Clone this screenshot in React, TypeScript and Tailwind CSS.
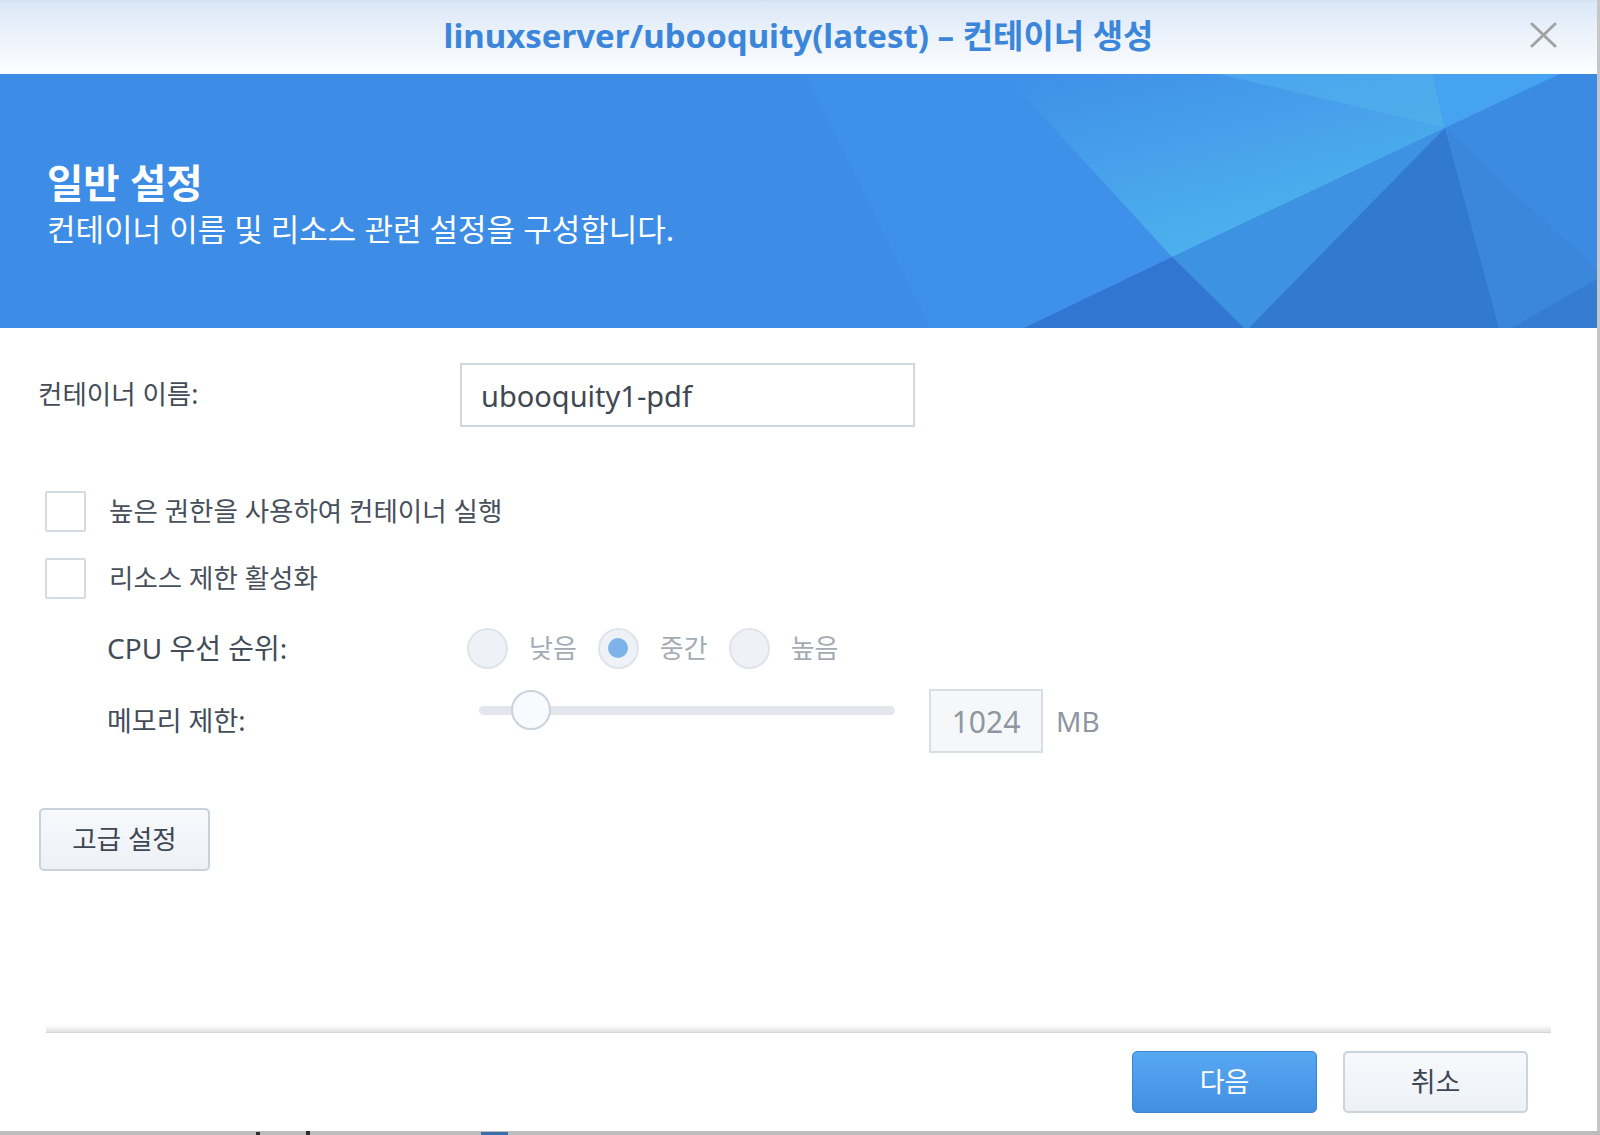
import React, { useState } from 'react';

const KR = "font-['Noto_Sans','Noto_Sans_CJK_KR',sans-serif]";

const BannerFacets: React.FC = () => (
  <svg
    className="absolute inset-0"
    width="1597"
    height="254"
    viewBox="0 0 1597 254"
    preserveAspectRatio="none"
  >
    <defs>
      <linearGradient id="lightFacet" x1="0" y1="0" x2="0.6" y2="1">
        <stop offset="0" stopColor="#3f8fe8" />
        <stop offset="1" stopColor="#4fb4ee" />
      </linearGradient>
      <linearGradient id="topFacet" x1="0" y1="0" x2="1" y2="1">
        <stop offset="0" stopColor="#4ba6ef" />
        <stop offset="1" stopColor="#4faee9" />
      </linearGradient>
    </defs>
    <polygon points="805,0 1004,0 1172,183 1024,254 930,254" fill="#3f90e8" />
    <polygon points="1004,0 1218,0 1445,54 1172,183" fill="url(#lightFacet)" />
    <polygon points="1218,0 1433,0 1445,54" fill="url(#topFacet)" />
    <polygon points="1433,0 1560,0 1445,54" fill="#45a3f1" />
    <polygon points="1560,0 1597,0 1597,196 1445,54" fill="#3b8be2" />
    <polygon points="1172,183 1445,54 1249,254 1244,254" fill="#3e92e2" />
    <polygon points="1172,183 1244,254 1024,254" fill="#3176d0" />
    <polygon points="1445,54 1499,254 1249,254" fill="#3279d1" />
    <polygon points="1445,54 1597,196 1597,254 1499,254" fill="#3a87dc" />
    <polygon points="1597,205 1597,254 1512,254" fill="#347dd3" />
  </svg>
);

const Checkbox: React.FC<{ label: string }> = ({ label }) => {
  const [on, setOn] = useState(false);
  return (
    <label className="flex items-center cursor-pointer">
      <span
        onClick={() => setOn(!on)}
        className={`ml-[7px] w-[41px] h-[41px] border-2 border-[#d5dbe3] rounded-[2px] ${on ? 'bg-[#4a95e6]' : 'bg-white'}`}
      />
      <span className="ml-[23px] text-[26.5px] text-[#47505b]">{label}</span>
    </label>
  );
};

const Radio: React.FC<{ label: string; checked?: boolean }> = ({ label, checked }) => (
  <div className="flex items-center">
    <span className="w-[41px] h-[41px] rounded-full border-2 border-[#dfe4ea] bg-[#eef1f5] flex items-center justify-center">
      {checked && <span className="w-[20px] h-[20px] rounded-full bg-[#7cb4ea]" />}
    </span>
    <span className="ml-[21px] mr-[21px] text-[26px] text-[#a3abb4]">{label}</span>
  </div>
);

export default function App() {
  const [name, setName] = useState('ubooquity1-pdf');

  return (
    <div className={`w-[1600px] h-[1135px] bg-[#c6c6c6] overflow-hidden flex flex-col ${KR}`}>
      <div className="w-[1597px] h-[1131px] bg-white flex flex-col">
        {/* title bar */}
        <div className="relative h-[74px] flex items-center justify-center pb-[5px] bg-gradient-to-b from-[#dce8f7] to-[#fdfeff] border-t-2 border-[#d4e3f3]">
          <h1 className="text-[33px] font-bold text-[#3b86da]">
            linuxserver/ubooquity(latest) – 컨테이너 생성
          </h1>
          <button className="absolute right-[40px] top-[20px] w-[27px] h-[26px]">
            <svg width="27" height="26" viewBox="0 0 27 26">
              <path d="M2 2 L25 24 M25 2 L2 24" stroke="#a2a2a2" strokeWidth="3" strokeLinecap="round" />
            </svg>
          </button>
        </div>

        {/* header banner */}
        <div className="relative h-[254px] bg-[#3d8ce6] overflow-hidden">
          <BannerFacets />
          <div className="relative pl-[47px] pt-[84px] text-white">
            <h2 className="text-[39.5px] font-bold leading-[50px]">일반 설정</h2>
            <p className="text-[31px] leading-[42px]">컨테이너 이름 및 리소스 관련 설정을 구성합니다.</p>
          </div>
        </div>

        {/* form */}
        <div className="flex-1 flex flex-col">
          <div className="pl-[38px] pt-[35px] flex flex-col">
            <div className="flex items-center h-[64px]">
              <span className="w-[422px] text-[26.5px] text-[#434c57]">컨테이너 이름:</span>
              <input
                value={name}
                onChange={e => setName(e.target.value)}
                className="w-[455px] h-[64px] border-2 border-[#d0d7e0] pl-[19px] text-[29px] text-[#3f4852] outline-none"
              />
            </div>

            <div className="mt-[64px]">
              <Checkbox label="높은 권한을 사용하여 컨테이너 실행" />
            </div>
            <div className="mt-[26px]">
              <Checkbox label="리소스 제한 활성화" />
            </div>

            <div className="mt-[29px] flex items-center h-[40px] pl-[69px]">
              <span className="w-[360px] text-[28px] text-[#434c57]">CPU 우선 순위:</span>
              <Radio label="낮음" />
              <Radio label="중간" checked />
              <Radio label="높음" />
            </div>

            <div className="mt-[21px] flex items-center h-[64px] pl-[69px]">
              <span className="w-[360px] text-[27px] text-[#434c57]">메모리 제한:</span>
              <div className="self-start ml-[12px] w-[416px] h-[42px] flex items-center">
                <div className="relative w-full h-[9px] rounded-full bg-[#e3e6ea]">
                  <span className="absolute left-[32px] top-[-16px] w-[40px] h-[40px] rounded-full border-2 border-[#c9d2de] bg-[#f8fafd]" />
                </div>
              </div>
              <div className="ml-[34px] w-[114px] h-[64px] border-2 border-[#d8dee5] bg-[#f5f7f9] flex items-center justify-center text-[30px] text-[#8e97a1]">
                1024
              </div>
              <span className="ml-[13px] text-[28px] text-[#8e97a1]">MB</span>
            </div>

            <button className="mt-[55px] ml-[1px] w-[171px] h-[63px] rounded-[5px] border-2 border-[#c8d1dc] bg-gradient-to-b from-[#f7f9fc] to-[#edf1f6] text-[26.5px] text-[#3e4753]">
              고급 설정
            </button>
          </div>

          {/* footer */}
          <div className="mt-auto">
            <div className="mx-[46px] h-[8px] bg-gradient-to-b from-white to-[#e2e2e2] border-b border-[#d6d6d6]" />
            <div className="flex justify-end gap-[26px] pr-[69px] pt-[18px] pb-[18px]">
              <button className="w-[185px] h-[62px] rounded-[5px] border border-[#3b83d3] bg-gradient-to-b from-[#57a8f3] to-[#428fe2] text-[27px] text-white">
                다음
              </button>
              <button className="w-[185px] h-[62px] rounded-[5px] border-2 border-[#cbd3dd] bg-gradient-to-b from-[#f7f9fc] to-[#edf1f6] text-[27px] text-[#3e4753]">
                취소
              </button>
            </div>
          </div>
        </div>
      </div>

      {/* page behind the dialog */}
      <div className="flex-1 flex items-end bg-[#bdbdbd]">
        <span className="ml-[256px] w-[4px] h-[3px] bg-[#2a2f36]" />
        <span className="ml-[46px] w-[4px] h-[4px] bg-[#2a2f36]" />
        <span className="ml-[171px] w-[27px] h-[3px] bg-[#3a6ea8]" />
      </div>
    </div>
  );
}
